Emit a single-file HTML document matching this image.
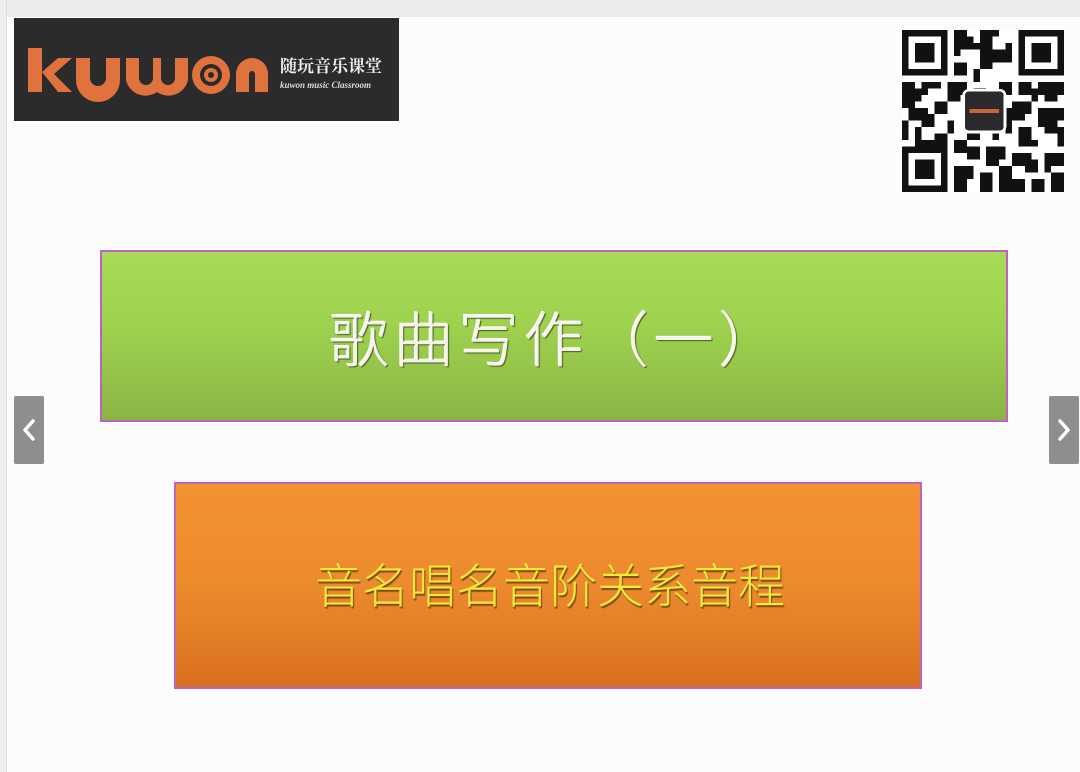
<!DOCTYPE html>
<html><head><meta charset="utf-8"><style>
body{margin:0;width:1080px;height:772px;overflow:hidden;background:#fbfcfb;position:relative;font-family:"Liberation Sans","Noto Sans CJK SC",sans-serif}
.top{position:absolute;left:0;top:0;width:1080px;height:17px;background:#ebebeb}
.lb{position:absolute;left:0;top:0;width:6px;height:772px;background:#eeeeee;border-right:1px solid #dcdcdc}
.logo{position:absolute;left:14px;top:18px;width:385px;height:103px;background:#2b2b2b}
.box{position:absolute;box-sizing:border-box;border:2px solid #c060c0;display:flex;align-items:center;justify-content:center}
.g{left:100px;top:250px;width:908px;height:172px;background:linear-gradient(#a8dc58,#9ed14e 45%,#8ab545);}
.g span{font-size:60px;color:#f4f4ea;font-weight:300;letter-spacing:5px;text-shadow:1px 1px 1px #4a5a20,-1px -1px 0 #fff;margin-top:0px;margin-left:5px}
.o{left:174px;top:482px;width:748px;height:207px;background:linear-gradient(#f39232,#ec8a2e 50%,#d9701e)}
.o span{font-size:47px;color:#f2e93a;font-weight:300;text-shadow:1px 2px 1px #7a4a10;margin-top:-6px;margin-left:4px}
.arr{position:absolute;top:396px;width:30px;height:68px;background:#8e8e8e;border-radius:2px}
</style></head><body>
<div class="top"></div><div class="lb"></div>
<div class="logo">
<svg width="385" height="103" viewBox="0 0 385 103">
<g fill="#e0733d">
<rect x="14" y="30" width="14" height="44"/>
<path d="M28 54 L44 40 L58 40 L40 56 L58 74 L44 74 Z"/>
<path d="M62 40 h14 v20 a8 8 0 0 0 16 0 v-20 h14 v22 a22 22 0 0 1 -44 0z"/>
<path d="M112 40 h13 v20 a7 7 0 0 0 14 0 v-20 h8 v20 a7 7 0 0 0 14 0 v-20 h13 v22 a20 20 0 0 1 -31 12 a20 20 0 0 1 -31 -12z"/>
<circle cx="197" cy="57" r="19"/>
<path d="M222 74 v-18 a16 16 0 0 1 32 0 v18 h-13 v-18 a3 3 0 0 0 -6 0 v18z"/>
</g>
<circle cx="197" cy="57" r="11" fill="#2b2b2b"/><circle cx="197" cy="57" r="7" fill="#e0733d"/><circle cx="197" cy="57" r="3" fill="#2b2b2b"/>
<text x="266" y="54" fill="#eee" font-size="17" font-family="Noto Serif CJK SC,serif" font-weight="bold">随玩音乐课堂</text>
<text x="266" y="70" fill="#ddd" font-size="9" font-style="italic" font-family="Liberation Serif,serif" font-weight="bold">kuwon music Classroom</text>
</svg></div>
<svg style="position:absolute;left:902px;top:30px" width="162" height="162" viewBox="0 0 25 25" shape-rendering="crispEdges">
<rect width="25" height="25" fill="#fff"/>
<g fill="#111">
<path d="M0 0h7v7h-7zM1 1v5h5v-5zM2 2h3v3h-3z" fill-rule="evenodd"/>
<path d="M18 0h7v7h-7zM19 1v5h5v-5zM20 2h3v3h-3z" fill-rule="evenodd"/>
<path d="M0 18h7v7h-7zM1 19v5h5v-5zM2 20h3v3h-3z" fill-rule="evenodd"/>
<path d="M8 0h2v1h1v2h-2v1h-1zM12 0h3v1h-1v2h2v2h-2v1h-2v-3h-1v-1h1zM16 2h1v3h-1zM8 5h2v2h-2zM11 6h1v2h-1z"/>
<path d="M0 8h2v1h1v2h-1v1h-2zM3 8h3v1h-2v1h-1zM7 8h3v2h-1v1h-2zM11 9h2v1h2v1h-4zM15 8h2v2h-1v2h-1zM18 8h2v1h2v1h-4zM21 8h4v2h-1v1h-2v-1h-1z"/>
<path d="M1 12h3v1h1v2h-2v-1h-2zM5 11h2v2h-2zM0 14h1v3h-1zM2 15h1v2h2v-1h2v2h-5zM17 11h3v2h-1v1h-2zM21 12h4v2h-2v1h-2zM18 15h2v2h1v1h-3zM22 15h3v3h-1v-2h-2z"/>
<path d="M8 17h2v1h2v2h-2v-1h-2zM13 18h3v2h-1v1h-2zM17 19h3v1h1v2h-2v-1h-2zM22 19h3v2h-2v1h-1zM8 21h3v2h-1v2h-2zM12 22h2v3h-2zM15 21h2v2h2v2h-4zM20 23h2v2h-2zM23 22h2v3h-2zM16 12h1v4h-1z"/>
<path d="M9 2h1v1h-1zM13 4h1v1h-1zM4 13h1v1h-1zM7 14h1v2h-1zM20 10h1v1h-1zM23 14h1v1h-1zM10 18h1v1h-1zM19 21h1v1h-1zM14 16h1v1h-1zM10 16h2v1h-2z"/>
</g>
<rect x="9.5" y="9.3" width="6.4" height="6.4" rx="0.8" fill="#2a2a2a" stroke="#fff" stroke-width="0.4"/>
<rect x="10.4" y="12.2" width="4.6" height="0.6" fill="#c8643a"/>
</svg>
<div class="box g"><span>歌曲写作（一）</span></div>
<div class="box o"><span>音名唱名音阶关系音程</span></div>
<div class="arr" style="left:14px"><svg width="30" height="68"><path d="M19 25 L11 34 L19 43" stroke="#fff" stroke-width="3.5" fill="none" stroke-linecap="round" stroke-linejoin="round"/></svg></div>
<div class="arr" style="left:1049px"><svg width="30" height="68"><path d="M11 25 L19 34 L11 43" stroke="#fff" stroke-width="3.5" fill="none" stroke-linecap="round" stroke-linejoin="round"/></svg></div>
</body></html>
